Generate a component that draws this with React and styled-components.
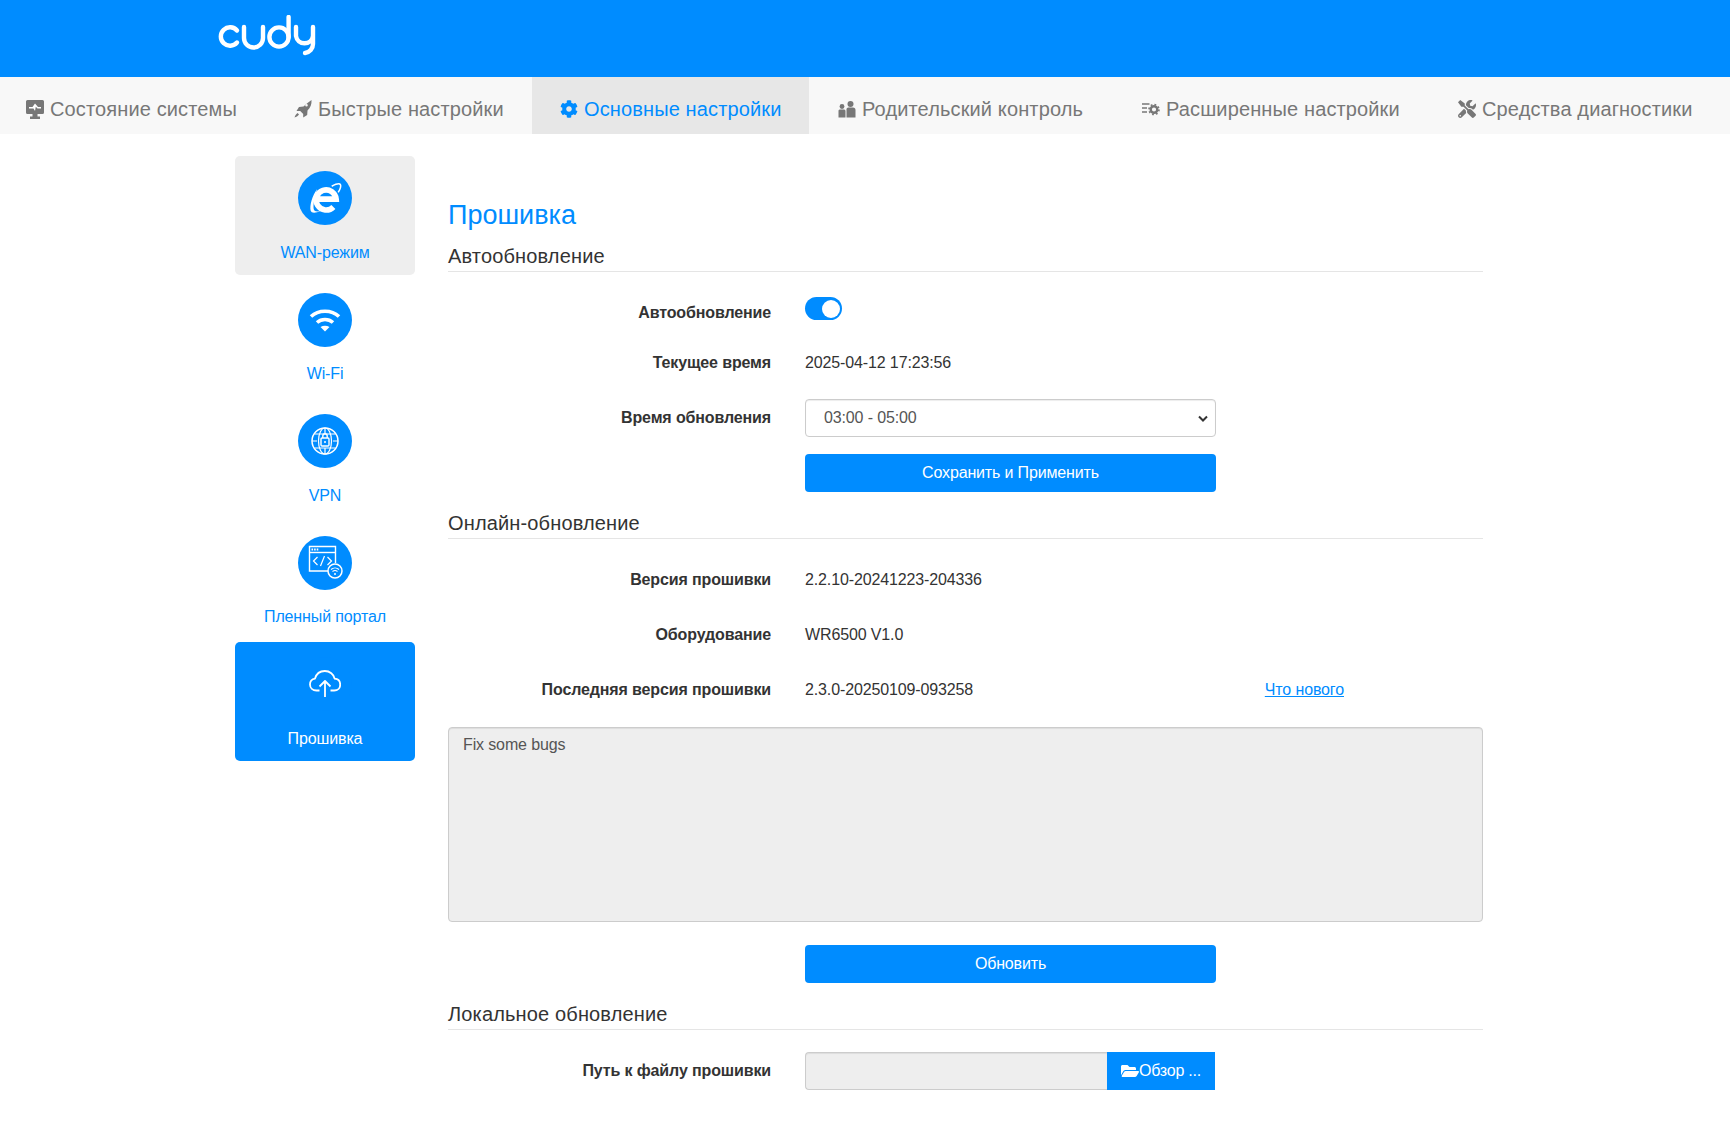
import styled, { createGlobalStyle } from "styled-components";
import { FaCog, FaFolderOpen, FaTools } from "react-icons/fa";

const BLUE = "#008cff";

const GlobalStyle = createGlobalStyle`
  html, body {
    margin: 0;
    padding: 0;
    background: #fff;
  }
  body {
    font-family: "Liberation Sans", Arial, sans-serif;
    font-size: 16px;
    letter-spacing: -0.13px;
    color: #333;
    overflow: hidden;
  }
  * {
    box-sizing: border-box;
  }
`;

const Page = styled.div`
  width: 1730px;
  height: 1123px;
  overflow: hidden;
`;

const Header = styled.header`
  height: 77px;
  background-color: ${BLUE};
  display: flex;
  align-items: flex-start;
  padding: 15px 0 0 217px;
`;

const Nav = styled.nav`
  height: 57px;
  background-color: #f8f8f8;
  display: flex;
`;

const Tab = styled.a`
  display: flex;
  align-items: center;
  gap: 6px;
  height: 100%;
  padding: 7px 0 0 ${(p) => p.$pad}px;
  width: ${(p) => p.$width}px;
  font-size: 20px;
  letter-spacing: 0.13px;
  color: ${(p) => (p.$active ? BLUE : "#777")};
  background-color: ${(p) => (p.$active ? "#e7e7e7" : "transparent")};
  white-space: nowrap;
  svg {
    flex: none;
  }
`;

const Body = styled.div`
  display: flex;
  align-items: flex-start;
  padding: 22px 0 0 235px;
  gap: 33px;
`;

const Sidebar = styled.aside`
  width: 180px;
  flex: none;
  display: flex;
  flex-direction: column;
  gap: 2.6px;
`;

const SideItem = styled.a`
  height: 119px;
  padding-top: 15px;
  display: flex;
  flex-direction: column;
  align-items: center;
  border-radius: 5px;
  font-size: 16px;
  color: ${(p) => (p.$active ? "#fff" : BLUE)};
  background-color: ${(p) =>
    p.$active ? BLUE : p.$hover ? "#eee" : "transparent"};
`;

const IconCircle = styled.span`
  width: 54px;
  height: 54px;
  border-radius: 50%;
  background-color: ${BLUE};
  display: flex;
  align-items: center;
  justify-content: center;
  color: #fff;
`;

const SideLabel = styled.span`
  margin-top: 17.6px;
  line-height: 19px;
`;

const Main = styled.main`
  width: 1035px;
  flex: none;
  padding-top: 43px;
`;

const Title = styled.h1`
  margin: 0;
  font-size: 27px;
  font-weight: 400;
  line-height: 32px;
  letter-spacing: 0;
  color: ${BLUE};
`;

const SectionTitle = styled.h2`
  margin: ${(p) => p.$top || 0}px 0 0;
  padding-bottom: 4px;
  font-size: 20px;
  font-weight: 400;
  line-height: 22px;
  letter-spacing: 0.15px;
  color: #333;
  border-bottom: 1px solid #e5e5e5;
`;

const Row = styled.div`
  display: grid;
  grid-template-columns: 323px 1fr;
  column-gap: 34px;
  align-items: center;
  min-height: 38px;
  margin-top: ${(p) => p.$top || 0}px;
  font-size: 16px;
`;

const Label = styled.label`
  text-align: right;
  font-weight: 700;
`;

const Value = styled.div`
  display: flex;
  align-items: center;
  justify-content: space-between;
  width: 539px;
`;

const Switch = styled.span`
  display: block;
  width: 37px;
  height: 23px;
  margin-top: -9px;
  border-radius: 12px;
  background-color: ${BLUE};
  position: relative;
  &::after {
    content: "";
    position: absolute;
    top: 3px;
    right: 2px;
    width: 18px;
    height: 18px;
    border-radius: 50%;
    background-color: #fff;
  }
`;

const Select = styled.select`
  appearance: none;
  width: 411px;
  height: 38px;
  padding: 0 18px 1px;
  font-family: inherit;
  font-size: 16px;
  letter-spacing: -0.13px;
  color: #555;
  background-color: #fff;
  background-image: url("data:image/svg+xml,%3Csvg xmlns='http://www.w3.org/2000/svg' width='10' height='7'%3E%3Cpath d='M1 1.500l4 4 4-4' fill='none' stroke='%23333' stroke-width='2'/%3E%3C/svg%3E");
  background-repeat: no-repeat;
  background-position: right 7px center;
  border: 1px solid #ccc;
  border-radius: 4px;
  box-shadow: inset 0 1px 1px rgba(0, 0, 0, 0.075);
`;

const Button = styled.button`
  display: block;
  width: 411px;
  height: 38px;
  padding: 0 0 1px;
  border: 0;
  border-radius: 4px;
  background-color: ${BLUE};
  color: #fff;
  font-family: inherit;
  font-size: 16px;
  letter-spacing: -0.15px;
`;

const WhatsNew = styled.a`
  color: ${BLUE};
  text-decoration: underline;
`;

const Notes = styled.textarea`
  display: block;
  width: 1035px;
  height: 195px;
  margin-top: 18px;
  padding: 6px 14px;
  resize: none;
  font-family: inherit;
  font-size: 16px;
  letter-spacing: -0.13px;
  line-height: 22px;
  color: #555;
  background-color: #eee;
  border: 1px solid #ccc;
  border-radius: 4px;
  box-shadow: inset 0 1px 1px rgba(0, 0, 0, 0.075);
`;

const FileGroup = styled.div`
  display: flex;
  width: 410px;
  height: 38px;
`;

const FileInput = styled.div`
  flex: 1;
  background-color: #eee;
  border: 1px solid #ccc;
  border-right: 0;
  border-radius: 4px 0 0 4px;
  box-shadow: inset 0 1px 1px rgba(0, 0, 0, 0.075);
`;

const BrowseButton = styled.span`
  width: 108px;
  display: flex;
  align-items: center;
  justify-content: center;
  background-color: ${BLUE};
  color: #fff;
  font-size: 16px;
  letter-spacing: -0.2px;
  white-space: nowrap;
`;

const CudyLogo = () => (
  <svg width="100" height="44" viewBox="0 0 100 44" fill="none" stroke="#fff" strokeWidth="4.4" strokeLinecap="round" strokeLinejoin="round">
    <path d="M20 15.5 A9.2 9.2 0 1 0 20 27.5" />
    <path d="M27 12 V23 A9.5 9.5 0 0 0 46 23 V12" />
    <circle cx="62" cy="22" r="9.6" />
    <path d="M71.6 2 V22" />
    <path d="M79 12 V21 A8.6 8.6 0 0 0 96 21 V12 M96 20 V29 A9 9 0 0 1 88 38" />
  </svg>
);

const MonitorIcon = () => (
  <svg width="18" height="19" viewBox="0 0 18 19">
    <path fill="#777" d="M1.5 0h15A1.5 1.5 0 0 1 18 1.5v11a1.5 1.500 0 0 1-1.500 1.500H11.500v2.500H14V19H4v-2.500h2.500V14h-5A1.500 1.500 0 0 1 0 12.500v-11A1.500 1.500 0 0 1 1.500 0z" />
    <path fill="#fff" d="M9 3.500l3 3.500h3v1.500h-3.500L9.800 6.800 9 11 7.500 8.500H3V7h3.500z" />
  </svg>
);

const RocketIcon = () => (
  <svg width="18" height="18" viewBox="0 0 18 18" fill="#777">
    <path fillRule="evenodd" d="M17.500.500c.3 3.500-1 7-4 10l-.3 4.500-4 2.500v-3.500l-3-3H2.500l2.500-4 4.500-.5c3-3 6-5 8-6.500zM12.500 4a1.300 1.300 0 1 0 0 2.600 1.300 1.300 0 0 0 0-2.600z" />
    <path d="M3.500 13c-1.500 1-2.500 3-3 4.500 1.500-.5 3.500-1.500 4.500-3z" />
  </svg>
);

const ParentIcon = () => (
  <svg width="18" height="17" viewBox="0 0 18 17" fill="#777">
    <circle cx="4" cy="5.500" r="2.400" />
    <circle cx="12.500" cy="3" r="3" />
    <path d="M0.500 9.500A1.500 1.500 0 0 1 2 8.500h4.200A1.500 1.500 0 0 1 7.500 10v6.500H0.500z" />
    <path d="M8.500 9a2 2 0 0 1 2-2.500h4.500a2.500 2.500 0 0 1 2.500 2.500v7.500H8.500z" />
  </svg>
);

const AdvancedIcon = () => (
  <svg width="18" height="14" viewBox="0 0 18 14">
    <path stroke="#777" strokeWidth="1.600" d="M0 2h7.500M0 6h5M0 10h5" />
    <circle cx="12" cy="7.500" r="3.300" fill="none" stroke="#777" strokeWidth="2.400" />
    <circle cx="12" cy="7.500" r="5" fill="none" stroke="#777" strokeWidth="1.600" strokeDasharray="1.800 2.100" />
  </svg>
);

const IeIcon = () => (
  <svg width="38" height="38" viewBox="0 0 34 34" fill="none" stroke="#fff">
    <path strokeWidth="5" d="M9.500 18H27A9 9 0 1 0 24.500 25" />
    <path strokeWidth="1.400" d="M23 6.500c3.500-1.800 7-2.800 7.800-1.500 .7 1.300-.2 4-2 7" />
    <path fill="#fff" stroke="none" d="M10 9C5.500 15 3 24 4.200 28.500c.7 2.400 4.500 2.200 8.800 .2-3 .5-5.500 .5-6-1.300-.8-3.500 .2-10 3-18.400z" />
  </svg>
);

const WifiIcon = () => (
  <svg width="34" height="34" viewBox="0 0 34 34" fill="none" stroke="#fff">
    <path strokeWidth="3.600" d="M3 13.500C10.500 6.500 23.500 6.500 31 13.500" />
    <path strokeWidth="3.600" d="M9 19.500c4.500-4 11.500-4 16 0" />
    <path fill="#fff" stroke="none" d="M12.500 24c2.700-1.700 6.300-1.700 9 0L17 28.500z" />
  </svg>
);

const VpnIcon = () => (
  <svg width="30" height="30" viewBox="0 0 30 30" fill="none" stroke="#fff" strokeWidth="1.200">
    <circle cx="15" cy="15" r="13" strokeWidth="1.500" />
    <ellipse cx="15" cy="15" rx="6.500" ry="13" />
    <path d="M2 15h5M23 15h5M4.500 8h21M4.500 22h21M15 2v6M15 22v6" />
    <rect x="11" y="12" width="8" height="8" rx="1" strokeWidth="1.400" />
    <path d="M12.800 12V10a2.200 2.200 0 0 1 4.400 0v2" strokeWidth="1.400" />
    <circle cx="15" cy="16" r="1" fill="#fff" stroke="none" />
  </svg>
);

const PortalIcon = () => (
  <svg width="42" height="42" viewBox="0 0 42 42" fill="none" stroke="#fff">
    <path strokeWidth="1.400" d="M28 29H5.500V4.500h26V21" />
    <path strokeWidth="1.400" d="M5.500 10.500h26" />
    <path strokeWidth="1.800" strokeDasharray="1.600 1" d="M7.500 7.500h7" />
    <path strokeWidth="1.200" d="M13.500 15l-4 4 4 4M23.500 15l4 4-4 4M20.500 14l-4 10" />
    <circle cx="31" cy="29" r="7" fill={BLUE} strokeWidth="1.500" />
    <path strokeWidth="1.100" d="M27 27.500c2.300-2 5.700-2 8 0M28.500 29.500c1.500-1.200 3.500-1.200 5 0" />
    <circle cx="31" cy="32" r="1" fill="#fff" stroke="none" />
  </svg>
);

const CloudIcon = () => (
  <svg width="32" height="28" viewBox="0 0 32 28" fill="none" stroke="#fff" strokeWidth="1.800" strokeLinejoin="round">
    <path d="M10.500 20.500H7.500C3.800 20.500 1 18 1 14.500c0-3 2-5.400 5-5.900C7.300 4 11 1 15.800 1c5 0 9 3.300 9.900 7.700 3.400.3 5.500 2.800 5.500 6 0 3.300-2.500 5.800-6 5.800h-3.700" />
    <path d="M16 27V11M10.500 16.500L16 11l5.500 5.500" />
  </svg>
);

const tabs = [
  { text: "Состояние системы", icon: <MonitorIcon />, pad: 26, width: 269 },
  { text: "Быстрые настройки", icon: <RocketIcon />, pad: 25, width: 263 },
  { text: "Основные настройки", icon: <FaCog size={18} />, pad: 28, width: 277, active: true },
  { text: "Родительский контроль", icon: <ParentIcon />, pad: 29, width: 332 },
  { text: "Расширенные настройки", icon: <AdvancedIcon />, pad: 1, width: 315 },
  { text: "Средства диагностики", icon: <FaTools size={18} />, pad: 2, width: 274 },
];

const sideItems = [
  { text: "WAN-режим", icon: <IconCircle><IeIcon /></IconCircle>, hover: true },
  { text: "Wi-Fi", icon: <IconCircle><WifiIcon /></IconCircle> },
  { text: "VPN", icon: <IconCircle><VpnIcon /></IconCircle> },
  { text: "Пленный портал", icon: <IconCircle><PortalIcon /></IconCircle> },
  { text: "Прошивка", icon: <IconCircle><CloudIcon /></IconCircle>, active: true },
];

export default function App() {
  return (
    <Page>
      <GlobalStyle />
      <Header>
        <CudyLogo />
      </Header>
      <Nav>
        {tabs.map((t) => (
          <Tab key={t.text} $active={t.active} $pad={t.pad} $width={t.width}>
            {t.icon}
            {t.text}
          </Tab>
        ))}
      </Nav>
      <Body>
        <Sidebar>
          {sideItems.map((s) => (
            <SideItem key={s.text} $active={s.active} $hover={s.hover}>
              {s.icon}
              <SideLabel>{s.text}</SideLabel>
            </SideItem>
          ))}
        </Sidebar>
        <Main>
          <Title>Прошивка</Title>
          <SectionTitle $top={14}>Автообновление</SectionTitle>
          <Row $top={22}>
            <Label>Автообновление</Label>
            <div>
              <Switch />
            </div>
          </Row>
          <Row $top={12}>
            <Label>Текущее время</Label>
            <div>2025-04-12 17:23:56</div>
          </Row>
          <Row $top={17}>
            <Label>Время обновления</Label>
            <Select defaultValue="03:00 - 05:00">
              <option>03:00 - 05:00</option>
            </Select>
          </Row>
          <Row $top={17}>
            <span />
            <Button>Сохранить и Применить</Button>
          </Row>
          <SectionTitle $top={20}>Онлайн-обновление</SectionTitle>
          <Row $top={22}>
            <Label>Версия прошивки</Label>
            <div>2.2.10-20241223-204336</div>
          </Row>
          <Row $top={17}>
            <Label>Оборудование</Label>
            <div>WR6500 V1.0</div>
          </Row>
          <Row $top={17}>
            <Label>Последняя версия прошивки</Label>
            <Value>
              <span>2.3.0-20250109-093258</span>
              <WhatsNew>Что нового</WhatsNew>
            </Value>
          </Row>
          <Notes readOnly defaultValue="Fix some bugs" />
          <Row $top={23}>
            <span />
            <Button>Обновить</Button>
          </Row>
          <SectionTitle $top={20}>Локальное обновление</SectionTitle>
          <Row $top={22}>
            <Label>Путь к файлу прошивки</Label>
            <FileGroup>
              <FileInput />
              <BrowseButton>
                <FaFolderOpen size={18} />
                Обзор ...
              </BrowseButton>
            </FileGroup>
          </Row>
        </Main>
      </Body>
    </Page>
  );
}
